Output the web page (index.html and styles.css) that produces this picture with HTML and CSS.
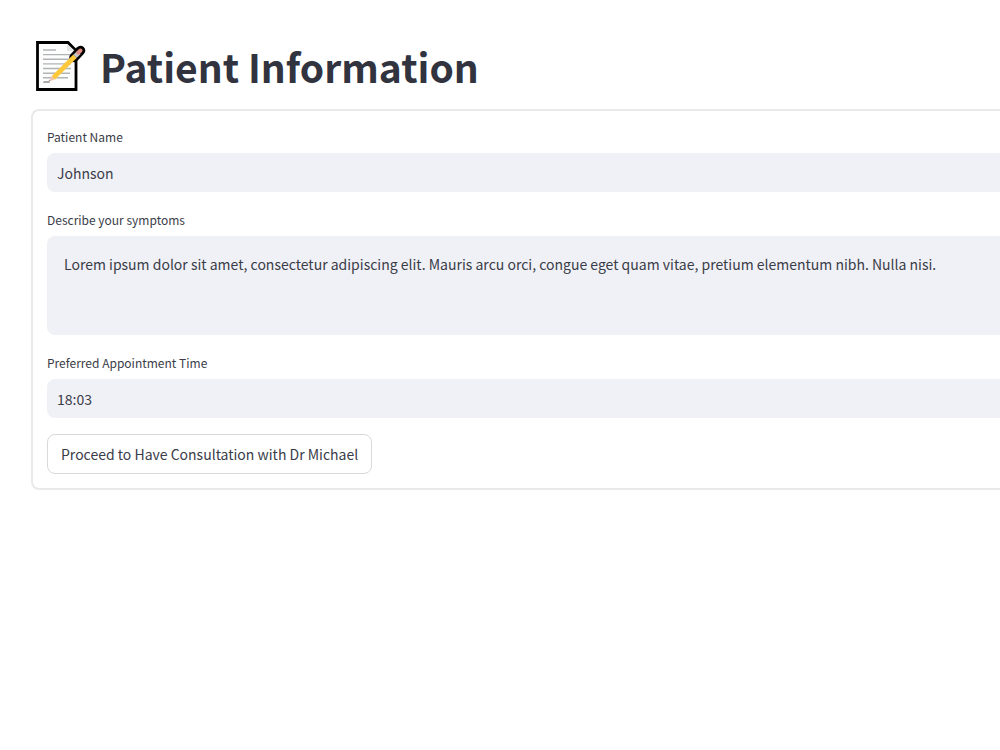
FILE: index.html
```html
<!DOCTYPE html>
<html lang="en">
<head>
<meta charset="utf-8">
<meta name="viewport" content="width=device-width, initial-scale=1">
<title>Patient Information</title>
<link rel="stylesheet" href="styles.css">
</head>
<body>
<main class="page">
  <header class="heading">
    <svg class="heading-icon" viewBox="0 0 50 50" aria-hidden="true">
      <path d="M1.5 1.5H32L40 9.5V48.5H1.5Z" fill="#fdfdfd" stroke="#000" stroke-width="2.8"/>
      <path d="M31 3V10H39Z" fill="#e4e5e5"/>
      <path d="M7 9H20M7 13.6H34M7 18.3H35M7 22.9H35M7 27.5H35M7 32.2H34M7 36.8H32M7 41.3H14" fill="none" stroke="#b1b4b5" stroke-width="1.4"/>
      <path d="M38 16.5L44.5 9.5" fill="none" stroke="#000" stroke-width="9.5" stroke-linecap="round"/>
      <path d="M13 40.8L16 34.5L19.5 38Z" fill="#f2c3ab"/>
      <path d="M17.5 36.8L39 15.3" fill="none" stroke="#fdc93b" stroke-width="4.8"/>
      <path d="M39 15.3L43 11.3" fill="none" stroke="#c4c6c7" stroke-width="4.6"/>
      <path d="M42.3 11.7L44.5 9.5" fill="none" stroke="#e08c83" stroke-width="4" stroke-linecap="round"/>
      <path d="M8 40.8H12L14 39" fill="none" stroke="#949899" stroke-width="1"/>
    </svg>
    <h1 class="title">Patient Information</h1>
  </header>
  <form class="form">
    <div class="fields">
      <div class="field">
        <label class="label" for="name">Patient Name</label>
        <input class="control" id="name" type="text" value="Johnson">
      </div>
      <div class="field">
        <label class="label" for="symptoms">Describe your symptoms</label>
        <textarea class="control control-area" id="symptoms">Lorem ipsum dolor sit amet, consectetur adipiscing elit. Mauris arcu orci, congue eget quam vitae, pretium elementum nibh. Nulla nisi.</textarea>
      </div>
      <div class="field">
        <label class="label" for="time">Preferred Appointment Time</label>
        <input class="control" id="time" type="text" value="18:03">
      </div>
    </div>
    <button class="submit" type="button">Proceed to Have Consultation with Dr Michael</button>
  </form>
</main>
</body>
</html>
```
FILE: styles.css
```css
* {
  box-sizing: border-box;
}

body {
  margin: 0;
  background: #fff;
  color: #3a3c48;
  font-family: "Noto Sans CJK SC", "Noto Sans", sans-serif;
  font-size: 14px;
}

.page {
  padding: 41px 0 32px 31px;
}

.heading {
  display: flex;
  align-items: center;
  gap: 14px;
  margin-bottom: 18px;
  padding-left: 5px;
}

.heading-icon {
  flex: none;
  width: 50px;
  height: 50px;
}

.title {
  margin: 0;
  color: #31333f;
  font-size: 39px;
  font-weight: 700;
  line-height: 50px;
}

.form {
  padding: 16px 0 14px 14px;
  border: 2px solid #e9e9ea;
  border-right: 0;
  border-radius: 8px 0 0 8px;
}

.fields {
  display: grid;
  gap: 18px;
  margin-bottom: 16px;
}

.field {
  display: grid;
  gap: 6px;
}

.label {
  font-size: 12px;
  line-height: 20px;
}

.control {
  width: 100%;
  height: 39px;
  margin: 0;
  padding: 0 10px;
  border: 0;
  border-radius: 8px 0 0 8px;
  background: #f0f1f6;
  color: inherit;
  font: inherit;
}

.control-area {
  display: block;
  height: 99px;
  padding: 16px 17px;
  line-height: 24px;
  resize: none;
}

.submit {
  min-height: 40px;
  padding: 0 13px;
  border: 1px solid #d9d9dc;
  border-radius: 8px;
  background: #fff;
  color: inherit;
  font: inherit;
  cursor: pointer;
}
```
